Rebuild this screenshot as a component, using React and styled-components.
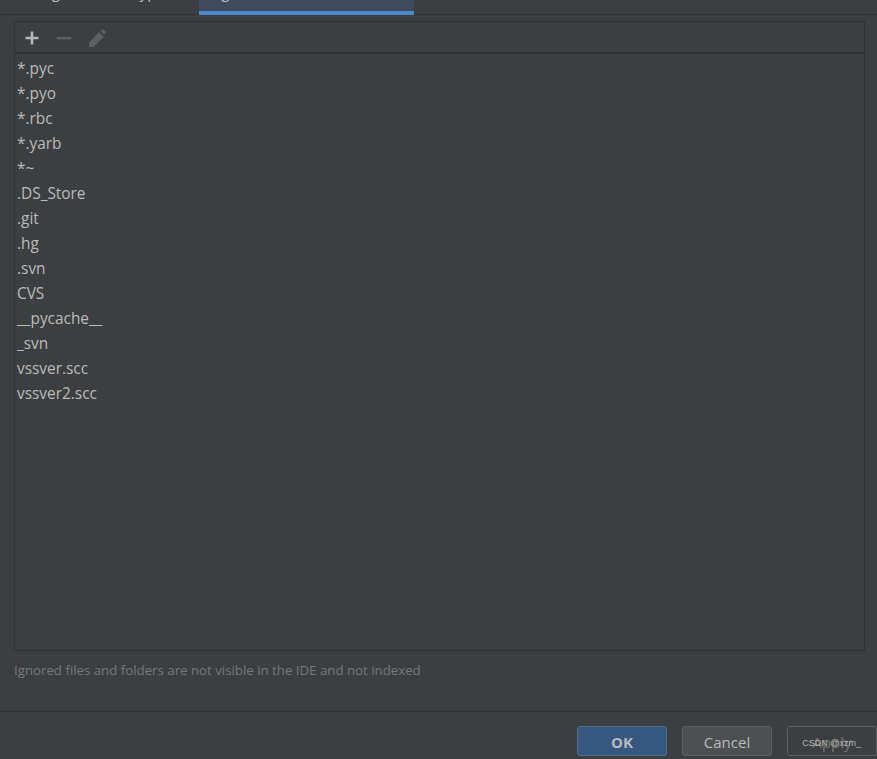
import React from "react";
import styled, { createGlobalStyle } from "styled-components";

const Global = createGlobalStyle`
  html, body { margin: 0; padding: 0; background: #3c3f41; }
  #root { width: 877px; height: 759px; overflow: hidden; }
`;

const Page = styled.div`
  width: 877px;
  height: 759px;
  overflow: hidden;
  display: flex;
  flex-direction: column;
  background: #3c3f41;
  color: #bbbbbb;
  font-family: "Open Sans", "Noto Sans", sans-serif;
`;

const TabBar = styled.div`
  flex: none;
  height: 39px;
  margin-top: -25px;
  display: flex;
  border-bottom: 1px solid #323232;
`;

const Tab = styled.div`
  box-sizing: border-box;
  width: ${(p) => p.$width}px;
  height: 40px;
  padding-left: ${(p) => p.$pad}px;
  font-size: 15.4px;
  line-height: 36px;
  white-space: nowrap;
  overflow: hidden;
  background: ${(p) => (p.$active ? "#3d4b5c" : "transparent")};
  border-bottom: ${(p) => (p.$active ? "4px solid #4a88c7" : "0")};
`;

const Body = styled.div`
  flex: 1;
  min-height: 0;
  display: flex;
  flex-direction: column;
  padding: 6px 12px 0 14px;
`;

const ListBox = styled.div`
  flex: none;
  height: 630px;
  box-sizing: border-box;
  display: flex;
  flex-direction: column;
  border: 1px solid #323232;
`;

const Toolbar = styled.div`
  flex: none;
  height: 32px;
  box-sizing: border-box;
  display: flex;
  align-items: center;
  gap: 12px;
  padding: 1px 0 0 7px;
  border-bottom: 2px solid #323232;
`;

const ToolIcon = styled.svg`
  width: 20px;
  height: 20px;
  display: block;
`;

const List = styled.ul`
  list-style: none;
  margin: 0;
  padding: 2px 0 0 2px;
`;

const Row = styled.li`
  height: 25px;
  font-size: 15.4px;
  line-height: 25px;
  color: #bbbbbb;
`;

const Hint = styled.div`
  margin-top: 9px;
  font-size: 13.25px;
  line-height: 20px;
  color: #787878;
`;

const Footer = styled.div`
  flex: none;
  height: 48px;
  box-sizing: border-box;
  position: relative;
  display: flex;
  justify-content: flex-end;
  align-items: flex-start;
  gap: 15px;
  padding-top: 14px;
  border-top: 1px solid #323232;
`;

const Button = styled.div`
  flex: none;
  box-sizing: border-box;
  width: 90px;
  height: 30px;
  border-radius: 3px;
  text-align: center;
  font-size: 15px;
  line-height: 30px;
  border: 1px solid ${(p) => p.$border};
  background: ${(p) => p.$bg};
  color: ${(p) => p.$color};
  font-weight: ${(p) => (p.$bold ? 700 : 400)};
`;

const Watermark = styled.span`
  position: absolute;
  right: 16px;
  top: 25px;
  font-family: "Liberation Sans", sans-serif;
  font-size: 9px;
  line-height: 12px;
  color: #b4b4b4;
`;

const items = ["*.pyc", "*.pyo", "*.rbc", "*.yarb", "*~", ".DS_Store", ".git", ".hg", ".svn", "CVS", "__pycache__", "_svn", "vssver.scc", "vssver2.scc"];

export default function App() {
  return (
    <Page>
      <Global />
      <TabBar>
        <Tab $width={199} $pad={17}>Recognized File Types</Tab>
        <Tab $width={215} $pad={18} $active>Ignored Files and Folders</Tab>
      </TabBar>
      <Body>
        <ListBox>
          <Toolbar>
            <ToolIcon viewBox="0 0 20 20">
              <path d="M8.7 3.5h2.6v5.2h5.2v2.6h-5.2v5.2h-2.6v-5.2h-5.2v-2.6h5.2z" fill="#b4b8bb" />
            </ToolIcon>
            <ToolIcon viewBox="0 0 20 20">
              <rect x="3" y="9" width="14" height="2.4" fill="#5e6163" />
            </ToolIcon>
            <ToolIcon viewBox="0 0 20 20">
              <path d="M3 19v-4.5L13.2 4.3l4.5 4.5L7.5 19zM14.4 3.1l1.6-1.6a1 1 0 0 1 1.4 0l2.1 2.1a1 1 0 0 1 0 1.4l-1.6 1.6z" fill="#5e6163" />
            </ToolIcon>
          </Toolbar>
          <List>
            {items.map((t) => (
              <Row key={t}>{t}</Row>
            ))}
          </List>
        </ListBox>
        <Hint>Ignored files and folders are not visible in the IDE and not indexed</Hint>
      </Body>
      <Footer>
        <Button $bg="#365880" $border="#4c708c" $color="#bbbbbb" $bold>OK</Button>
        <Button $bg="#4c5052" $border="#5e6060" $color="#bbbbbb">Cancel</Button>
        <Button $bg="#3c3f41" $border="#5e6060" $color="#777777">Apply</Button>
        <Watermark>CSDN @xzm_</Watermark>
      </Footer>
    </Page>
  );
}
